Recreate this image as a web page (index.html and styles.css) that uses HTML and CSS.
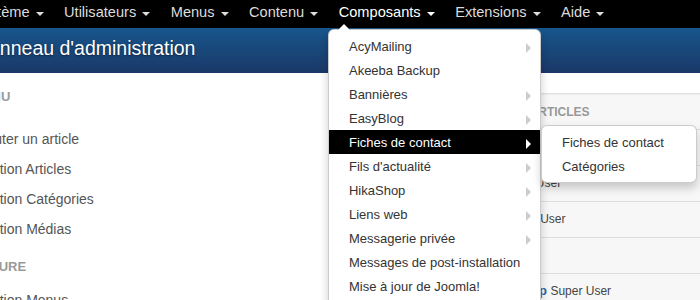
FILE: index.html
```html
<!DOCTYPE html>
<html lang="fr">
<head>
    <meta charset="UTF-8">
    <meta name="viewport" content="width=device-width, initial-scale=1.0">
    <title>Panneau d'administration</title>
    <link rel="stylesheet" href="styles.css">
</head>
<body>
    <nav class="navbar">
        <ul class="nav">
            <li class="nav-item"><a href="#">Système<span class="caret"></span></a></li>
            <li class="nav-item"><a href="#">Utilisateurs<span class="caret"></span></a></li>
            <li class="nav-item"><a href="#">Menus<span class="caret"></span></a></li>
            <li class="nav-item"><a href="#">Contenu<span class="caret"></span></a></li>
            <li class="nav-item open">
                <a href="#">Composants<span class="caret"></span></a>
                <ul class="dropdown">
                    <li class="has-sub"><a href="#">AcyMailing</a></li>
                    <li><a href="#">Akeeba Backup</a></li>
                    <li class="has-sub"><a href="#">Bannières</a></li>
                    <li class="has-sub"><a href="#">EasyBlog</a></li>
                    <li class="has-sub active">
                        <a href="#">Fiches de contact</a>
                        <ul class="dropdown submenu">
                            <li><a href="#">Fiches de contact</a></li>
                            <li><a href="#">Catégories</a></li>
                        </ul>
                    </li>
                    <li class="has-sub"><a href="#">Fils d'actualité</a></li>
                    <li class="has-sub"><a href="#">HikaShop</a></li>
                    <li class="has-sub"><a href="#">Liens web</a></li>
                    <li class="has-sub"><a href="#">Messagerie privée</a></li>
                    <li><a href="#">Messages de post-installation</a></li>
                    <li><a href="#">Mise à jour de Joomla!</a></li>
                    <li><a href="#">Recherche</a></li>
                    <li><a href="#">Redirections</a></li>
                    <li><a href="#">Tags</a></li>
                </ul>
            </li>
            <li class="nav-item"><a href="#">Extensions<span class="caret"></span></a></li>
            <li class="nav-item"><a href="#">Aide<span class="caret"></span></a></li>
        </ul>
    </nav>

    <header class="page-header">
        <h1 class="page-title">Panneau d'administration</h1>
    </header>

    <div class="main">
        <aside class="sidebar">
            <div class="side-section">
                <div class="side-head">Contenu</div>
                <a class="side-link" href="#">Ajouter un article</a>
                <a class="side-link" href="#">Gestion Articles</a>
                <a class="side-link" href="#">Gestion Catégories</a>
                <a class="side-link" href="#">Gestion Médias</a>
            </div>
            <div class="side-section">
                <div class="side-head">Structure</div>
                <a class="side-link" href="#">Gestion Menus</a>
                <a class="side-link" href="#">Gestion Modules</a>
            </div>
        </aside>

        <section class="content">
            <div class="well">
                <h2 class="module-title">Liste des trente derniers articles</h2>
                <div class="row"><a class="row-title" href="#">Conditions générales de vente</a> <span class="author">Super User</span></div>
                <div class="row"><a class="row-title" href="#">Bienvenue sur HikaShop</a> <span class="author">Super User</span></div>
                <div class="row"><a class="row-title" href="#">Suivi de votre commande</a> <span class="author">Super User</span></div>
                <div class="row"><a class="row-title" href="#">Nous contacter</a> <span class="author">Super User</span></div>
                <div class="row"><a class="row-title" href="#">Les premiers pas avec HikaShop</a> <span class="author">Super User</span></div>
            </div>
        </section>
    </div>
</body>
</html>
```

FILE: styles.css
```css
html, body {
    overflow: hidden;
}
body {
    margin: 0;
    font-family: "Liberation Sans", Arial, sans-serif;
    background: #fff;
    color: #333;
}
a {
    text-decoration: none;
}

/* top bar */
.navbar {
    background: #000;
    height: 28px;
    position: relative;
    z-index: 10;
}
.nav {
    display: flex;
    list-style: none;
    margin: 0 0 0 -37.5px;
    padding: 0;
}
.nav-item {
    position: relative;
}
.nav-item > a {
    display: block;
    padding: 0 10.25px 4px;
    line-height: 24px;
    font-size: 14.6px;
    color: #dcdcdc;
    white-space: nowrap;
}
.nav-item.open > a {
    color: #fff;
}
.caret {
    display: inline-block;
    vertical-align: top;
    margin: 12px 0 0 6px;
    border-top: 4px solid;
    border-left: 4px solid transparent;
    border-right: 4px solid transparent;
}

/* dropdown */
.dropdown {
    position: absolute;
    top: calc(100% + 1px);
    left: -0.5px;
    width: 213px;
    box-sizing: border-box;
    margin: 0;
    padding: 4px 0;
    list-style: none;
    background: #fff;
    border: 1px solid rgba(0, 0, 0, 0.2);
    border-radius: 6px;
    box-shadow: 0 5px 10px rgba(0, 0, 0, 0.2);
}
.nav-item > .dropdown::before,
.nav-item > .dropdown::after {
    content: "";
    position: absolute;
    border-left: 7px solid transparent;
    border-right: 7px solid transparent;
    border-bottom: 7px solid rgba(0, 0, 0, 0.2);
    top: -7px;
    left: 8px;
}
.nav-item > .dropdown::after {
    border-width: 0 6px 6px;
    border-bottom-color: #fff;
    top: -6px;
    left: 9px;
}
.dropdown li {
    position: relative;
}
.dropdown a {
    display: block;
    padding: 4px 20px 2px;
    line-height: 18px;
    font-size: 13px;
    color: #333;
    white-space: nowrap;
}
.has-sub > a::after {
    content: "";
    position: absolute;
    right: 9px;
    top: 9px;
    border-top: 5px solid transparent;
    border-bottom: 5px solid transparent;
    border-left: 5px solid #ccc;
}
.has-sub.active > a {
    background: #000;
    color: #fff;
}
.has-sub.active > a::after {
    border-left-color: #fff;
}
.submenu {
    top: -5px;
    left: calc(100% + 1px);
    width: 156px;
}

/* blue title band */
.page-header {
    height: 45px;
    box-sizing: border-box;
    padding: 6px 0 11px;
    background: linear-gradient(to bottom, #17568c, #1a3867);
}
.page-title {
    margin: 0 0 0 -24px;
    font-size: 19.5px;
    font-weight: normal;
    line-height: 28px;
    color: #fff;
    text-shadow: 0 1px 2px rgba(0, 0, 0, 0.5);
    white-space: nowrap;
}

/* body */
.main {
    display: flex;
}
.sidebar {
    flex: none;
    width: 360px;
    margin-left: -54px;
    padding-top: 14px;
}
.side-section + .side-section {
    margin-top: 13px;
}
.side-head {
    font-size: 13px;
    font-weight: bold;
    line-height: 20px;
    text-transform: uppercase;
    color: #999;
    margin-bottom: 8px;
}
.side-section:first-child .side-head {
    margin-bottom: 17px;
}
.side-link {
    display: block;
    padding-left: 28px;
    font-size: 14px;
    line-height: 30px;
    color: #555;
    white-space: nowrap;
}

.content {
    flex: 1;
    padding: 20px 0 0 28px;
    min-width: 0;
}
.well {
    margin-right: -40px;
    padding: 0 9px;
    background: #f7f7f7;
    border: 1px solid #e3e3e3;
    box-shadow: inset 0 1px 1px rgba(0, 0, 0, 0.05);
}
.module-title {
    margin: 0;
    padding: 1px 0 0 4px;
    font-size: 12px;
    line-height: 34px;
    text-transform: uppercase;
    color: #999;
    white-space: nowrap;
}
.row {
    height: 36px;
    box-sizing: border-box;
    margin: 0 -9px;
    padding: 8px 9px;
    border-top: 1px solid #ddd;
    font-size: 12px;
    line-height: 19px;
    color: #444;
    white-space: nowrap;
}
.row-title {
    font-size: 13px;
    line-height: 14px;
    font-weight: bold;
    color: #2767a8;
}
```
